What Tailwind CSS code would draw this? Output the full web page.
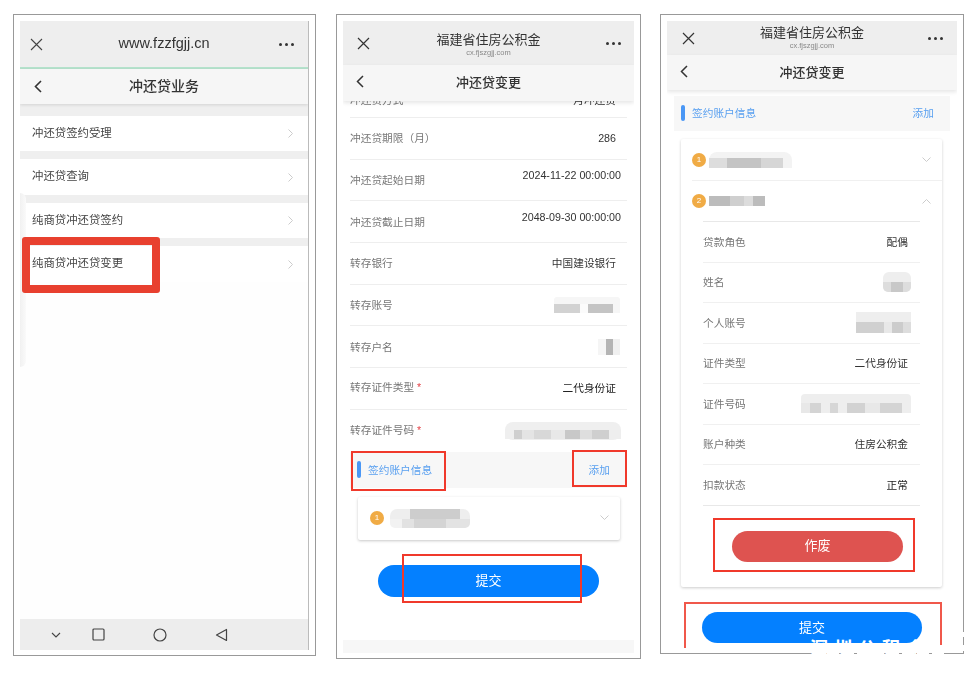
<!DOCTYPE html>
<html lang="zh-CN">
<head>
    <meta charset="UTF-8">
    <title>冲还贷变更</title>
    <script src="https://cdn.jsdelivr.net/npm/@tailwindcss/browser@4"></script>
</head>
<body class="bg-white">
<div class="relative flex h-[676px] w-[974px] items-start overflow-hidden bg-white pl-[13px] pt-[14px] font-['Liberation_Sans','Noto_Sans_CJK_SC',sans-serif]">

    <!-- 手机 1 -->
    <div class="h-[642px] w-[303px] shrink-0 border border-[#999] px-[6px] pb-[5px] pt-[6px]">
        <div class="relative flex h-full flex-col overflow-hidden border-r border-[#bbb] bg-white blur-[0.4px]">
            <div class="flex h-[46px] shrink-0 items-center justify-between bg-[#eeeeee]">
                <div class="flex w-[60px] pl-[10px]">
                    <svg width="13" height="13" viewBox="0 0 13 13" fill="none" stroke="#444" stroke-width="1.1"><path d="M1 1l11 11M12 1L1 12"/></svg>
                </div>
                <div class="text-[14.5px] font-medium text-[#333]">www.fzzfgjj.cn</div>
                <div class="flex w-[60px] justify-end gap-[3px] pr-[14px]">
                    <i class="h-[3px] w-[3px] rounded-full bg-[#333]"></i><i class="h-[3px] w-[3px] rounded-full bg-[#333]"></i><i class="h-[3px] w-[3px] rounded-full bg-[#333]"></i>
                </div>
            </div>
            <div class="h-[2px] shrink-0 bg-[#b5e2cc]"></div>
            <div class="z-10 flex h-[35px] shrink-0 items-center justify-between bg-[#f6f6f6] shadow-[0_1px_3px_rgba(0,0,0,0.12)]">
                <div class="flex w-[60px] pl-[14px]">
                    <svg width="8" height="13" viewBox="0 0 8 13" fill="none" stroke="#333" stroke-width="1.6"><path d="M7 1L1.5 6.5 7 12"/></svg>
                </div>
                <div class="text-[14px] font-medium text-[#333]">冲还贷业务</div>
                <div class="w-[60px]"></div>
            </div>
            <div class="h-[12px] shrink-0 bg-[#efefef]"></div>
            <div class="flex h-[35px] shrink-0 items-center justify-between bg-white pl-[12px] pr-[15px] text-[11.4px] text-[#444]">
                <span>冲还贷签约受理</span>
                <svg width="5" height="9" viewBox="0 0 5 9" fill="none" stroke="#ccc"><path d="M.5.5l4 4-4 4"/></svg>
            </div>
            <div class="h-[8px] shrink-0 bg-[#efefef]"></div>
            <div class="flex h-[36px] shrink-0 items-center justify-between bg-white pl-[12px] pr-[15px] text-[11.4px] text-[#444]">
                <span>冲还贷查询</span>
                <svg width="5" height="9" viewBox="0 0 5 9" fill="none" stroke="#ccc"><path d="M.5.5l4 4-4 4"/></svg>
            </div>
            <div class="h-[8px] shrink-0 bg-[#efefef]"></div>
            <div class="flex h-[35px] shrink-0 items-center justify-between bg-white pl-[12px] pr-[15px] text-[11.4px] text-[#444]">
                <span>纯商贷冲还贷签约</span>
                <svg width="5" height="9" viewBox="0 0 5 9" fill="none" stroke="#ccc"><path d="M.5.5l4 4-4 4"/></svg>
            </div>
            <div class="h-[8px] shrink-0 bg-[#efefef]"></div>
            <div class="flex h-[36px] shrink-0 items-center justify-between bg-white pl-[12px] pr-[15px] text-[11.4px] text-[#444]">
                <span>纯商贷冲还贷变更</span>
                <svg width="5" height="9" viewBox="0 0 5 9" fill="none" stroke="#ccc"><path d="M.5.5l4 4-4 4"/></svg>
            </div>
            <div class="flex-1 bg-[#fefefe]"></div>
            <div class="flex h-[31px] shrink-0 items-center bg-[#ededed] pl-[31px]">
                <svg width="10" height="6" viewBox="0 0 10 6" fill="none" stroke="#444" stroke-width="1.1"><path d="M1 1l4 4 4-4"/></svg>
                <svg class="ml-[31px]" width="13" height="13" viewBox="0 0 13 13" fill="none" stroke="#444" stroke-width="1.2"><rect x="1" y="1" width="11" height="11" rx="1"/></svg>
                <svg class="ml-[48px]" width="14" height="14" viewBox="0 0 14 14" fill="none" stroke="#444" stroke-width="1.2"><circle cx="7" cy="7" r="6"/></svg>
                <svg class="ml-[48px]" width="13" height="14" viewBox="0 0 13 14" fill="none" stroke="#444" stroke-width="1.2"><path d="M11.5 1.5v11L1.5 7z" stroke-linejoin="round"/></svg>
            </div>
            <!-- 왼쪽 희미한 플로팅 -->
            <div class="absolute left-0 top-[172px] h-[174px] w-[6px] rounded-r-[6px] bg-gradient-to-r from-[#f1f1f1] to-[#fafafa]"></div>
        </div>
    </div>

    <!-- 手机 2 -->
    <div class="ml-[20px] h-[645px] w-[305px] shrink-0 border border-[#999] px-[6px] pb-[5px] pt-[6px]">
        <div class="flex h-full flex-col overflow-hidden bg-white blur-[0.4px]">
            <div class="flex h-[44px] shrink-0 items-center justify-between bg-[#eeeeee]">
                <div class="flex w-[60px] pl-[14px]">
                    <svg width="13" height="13" viewBox="0 0 13 13" fill="none" stroke="#333" stroke-width="1.2"><path d="M1 1l11 11M12 1L1 12"/></svg>
                </div>
                <div class="mt-[3px] flex flex-col items-center">
                    <div class="text-[13px] leading-[16px] text-[#333]">福建省住房公积金</div>
                    <div class="text-[7.5px] leading-[10px] text-[#888]">cx.fjszgjj.com</div>
                </div>
                <div class="flex w-[60px] justify-end gap-[3px] pr-[13px]">
                    <i class="h-[3px] w-[3px] rounded-full bg-[#333]"></i><i class="h-[3px] w-[3px] rounded-full bg-[#333]"></i><i class="h-[3px] w-[3px] rounded-full bg-[#333]"></i>
                </div>
            </div>
            <div class="z-10 flex h-[36px] shrink-0 items-center justify-between bg-[#f6f6f6] shadow-[0_2px_4px_rgba(0,0,0,0.1)]">
                <div class="-mt-[4px] flex w-[60px] pl-[13px]">
                    <svg width="8" height="13" viewBox="0 0 8 13" fill="none" stroke="#333" stroke-width="1.5"><path d="M7 1L1.5 6.5 7 12"/></svg>
                </div>
                <div class="text-[13px] font-medium text-[#333]">冲还贷变更</div>
                <div class="w-[60px]"></div>
            </div>
            <div class="flex flex-1 flex-col px-[7px]">
                <div class="flex h-[17px] shrink-0 items-start justify-between border-b border-[#eeeeee] text-[10.7px] text-[#777]">
                    <span class="-mt-[9px]">冲还贷方式</span><span class="-mt-[9px] mr-[11px] text-[#333]">月冲还贷</span>
                </div>
                <div class="flex h-[41.7px] shrink-0 items-center justify-between border-b border-[#eeeeee] text-[10.7px] text-[#777]">
                    <span>冲还贷期限（月）</span><span class="mr-[11px] text-[#333]">286</span>
                </div>
                <div class="flex h-[41.7px] shrink-0 items-center justify-between border-b border-[#eeeeee] text-[10.7px] text-[#777]">
                    <span>冲还贷起始日期</span><span class="mb-[10px] mr-[6px] text-[#333]">2024-11-22 00:00:00</span>
                </div>
                <div class="flex h-[41.7px] shrink-0 items-center justify-between border-b border-[#eeeeee] text-[10.7px] text-[#777]">
                    <span>冲还贷截止日期</span><span class="mb-[10px] mr-[6px] text-[#333]">2048-09-30 00:00:00</span>
                </div>
                <div class="flex h-[41.7px] shrink-0 items-center justify-between border-b border-[#eeeeee] text-[10.7px] text-[#777]">
                    <span>转存银行</span><span class="mr-[11px] text-[#333]">中国建设银行</span>
                </div>
                <div class="flex h-[41.7px] shrink-0 items-center justify-between border-b border-[#eeeeee] text-[10.7px] text-[#777]">
                    <span>转存账号</span>
                    <div class="mr-[7px] h-[16px] w-[66px] rounded-[3px] bg-[#f6f6f6] pt-[7px] blur-[0.6px]">
                        <div class="h-[9px] bg-[linear-gradient(90deg,#d2d2d2_0_39%,#fbfbfb_39%_52%,#c4c4c4_52%_90%,#f6f6f6_90%)]"></div>
                    </div>
                </div>
                <div class="flex h-[41.7px] shrink-0 items-center justify-between border-b border-[#eeeeee] text-[10.7px] text-[#777]">
                    <span>转存户名</span>
                    <div class="mr-[7px] h-[16px] w-[22px] bg-[linear-gradient(90deg,#f5f5f5_0_36%,#b4b4b4_36%_68%,#f0f0f0_68%)] blur-[0.6px]"></div>
                </div>
                <div class="flex h-[41.7px] shrink-0 items-center justify-between border-b border-[#eeeeee] text-[10.7px] text-[#777]">
                    <span class="-mt-[2px]">转存证件类型 <b class="font-normal text-[#e5484d]">*</b></span><span class="mr-[11px] text-[#222]">二代身份证</span>
                </div>
                <div class="flex h-[41.7px] shrink-0 items-center justify-between text-[10.7px] text-[#777]">
                    <span class="-mt-[2px]">转存证件号码 <b class="font-normal text-[#e5484d]">*</b></span>
                    <div class="mr-[6px] h-[18px] w-[116px] rounded-[8px] bg-[#efefef] pt-[8px] blur-[0.6px]">
                        <div class="h-[9px] bg-[linear-gradient(90deg,#efefef_0_8%,#cfcfcf_8%_15%,#e4e4e4_15%_25%,#d8d8d8_25%_40%,#e8e8e8_40%_52%,#c8c8c8_52%_65%,#dedede_65%_75%,#cfcfcf_75%_90%,#eeeeee_90%)]"></div>
                    </div>
                </div>
                <div class="flex h-[36px] shrink-0 items-center justify-between bg-[#f7f7f7] pl-[7px] pr-[17px] text-[10.7px] text-[#5aa0f0]">
                    <div class="flex items-center gap-[7px]"><i class="h-[17px] w-[4px] rounded-[2px] bg-[#4a97f5]"></i><span class="mt-[1px]">签约账户信息</span></div>
                    <span class="mt-[2px]">添加</span>
                </div>
                <div class="ml-[8px] mr-[7px] mt-[9px] flex h-[43px] shrink-0 items-center rounded-[2px] bg-white pl-[12px] pr-[11px] shadow-[0_1px_3px_rgba(0,0,0,0.22)]">
                    <span class="flex h-[14px] w-[14px] items-center justify-center rounded-full bg-[#f0ab45] text-[8px] text-white">1</span>
                    <div class="ml-[6px] h-[19px] w-[80px] rounded-[7px] bg-[linear-gradient(90deg,#eeeeee_0_25%,#cdcdcd_25%_88%,#eeeeee_88%)] pt-[10px] blur-[0.7px]">
                        <div class="h-[9px] rounded-b-[5px] bg-[linear-gradient(90deg,#f2f2f2_0_15%,#e2e2e2_15%_30%,#d4d4d4_30%_70%,#e3e3e3_70%)]"></div>
                    </div>
                    <svg class="ml-auto" width="9" height="6" viewBox="0 0 9 6" fill="none" stroke="#ccc"><path d="M.5.5l4 4 4-4"/></svg>
                </div>
                <div class="ml-[28px] mt-[25px] flex h-[32px] w-[221px] shrink-0 items-center justify-center rounded-full bg-[#0480ff] text-[13px] text-white">提交</div>
            </div>
            <div class="h-[13px] shrink-0 bg-[#f7f7f7]"></div>
        </div>
    </div>

    <!-- 手机 3 -->
    <div class="ml-[19px] h-[640px] w-[304px] shrink-0 border border-[#999] px-[6px] pt-[6px]">
        <div class="flex h-[627px] flex-col overflow-hidden bg-white blur-[0.4px]">
            <div class="flex h-[34px] shrink-0 items-center justify-between bg-[#eeeeee]">
                <div class="flex w-[60px] pl-[15px]">
                    <svg width="13" height="13" viewBox="0 0 13 13" fill="none" stroke="#333" stroke-width="1.2"><path d="M1 1l11 11M12 1L1 12"/></svg>
                </div>
                <div class="flex flex-col items-center">
                    <div class="text-[13px] leading-[16px] text-[#333]">福建省住房公积金</div>
                    <div class="text-[7.5px] leading-[10px] text-[#888]">cx.fjszgjj.com</div>
                </div>
                <div class="flex w-[60px] justify-end gap-[3px] pr-[14px]">
                    <i class="h-[3px] w-[3px] rounded-full bg-[#333]"></i><i class="h-[3px] w-[3px] rounded-full bg-[#333]"></i><i class="h-[3px] w-[3px] rounded-full bg-[#333]"></i>
                </div>
            </div>
            <div class="z-10 flex h-[35px] shrink-0 items-center justify-between bg-[#f6f6f6] shadow-[0_2px_4px_rgba(0,0,0,0.1)]">
                <div class="-mt-[3px] flex w-[60px] pl-[13px]">
                    <svg width="8" height="13" viewBox="0 0 8 13" fill="none" stroke="#333" stroke-width="1.5"><path d="M7 1L1.5 6.5 7 12"/></svg>
                </div>
                <div class="text-[13px] font-medium text-[#333]">冲还贷变更</div>
                <div class="w-[60px]"></div>
            </div>
            <div class="mx-[7px] mt-[6px] flex h-[35px] shrink-0 items-center justify-between bg-[#f7f7f7] pl-[7px] pr-[16px] text-[10.7px] text-[#5aa0f0]">
                <div class="flex items-center gap-[7px]"><i class="h-[16px] w-[4px] rounded-[2px] bg-[#4a97f5]"></i><span>签约账户信息</span></div>
                <span>添加</span>
            </div>
            <div class="ml-[14px] mr-[15px] mt-[8px] flex h-[448px] shrink-0 flex-col rounded-[2px] bg-white shadow-[0_1px_3px_rgba(0,0,0,0.2)]">
                <div class="ml-[11px] flex h-[42px] shrink-0 items-center border-b border-[#f0f0f0] pr-[11px]">
                    <span class="flex h-[14px] w-[14px] items-center justify-center rounded-full bg-[#f0ab45] text-[8px] text-white">1</span>
                    <div class="ml-[3px] h-[16px] w-[83px] rounded-t-[8px] bg-[#f3f3f3] pt-[6px] blur-[0.5px]">
                        <div class="h-[10px] w-[74px] bg-[linear-gradient(90deg,#dddddd_0_24%,#c4c4c4_24%_70%,#d6d6d6_70%)]"></div>
                    </div>
                    <svg class="ml-auto" width="9" height="6" viewBox="0 0 9 6" fill="none" stroke="#ccc"><path d="M.5.5l4 4 4-4"/></svg>
                </div>
                <div class="ml-[11px] flex h-[40px] shrink-0 items-center pr-[11px]">
                    <span class="flex h-[14px] w-[14px] items-center justify-center rounded-full bg-[#f0ab45] text-[8px] text-white">2</span>
                    <div class="ml-[3px] h-[10px] w-[56px] bg-[linear-gradient(90deg,#bcbcbc_0_38%,#cfcfcf_38%_62%,#dcdcdc_62%_78%,#bcbcbc_78%)] blur-[0.5px]"></div>
                    <svg class="ml-auto" width="9" height="6" viewBox="0 0 9 6" fill="none" stroke="#ccc"><path d="M.5 5.5l4-4 4 4"/></svg>
                </div>
                <div class="mx-[22px] flex flex-col border-t border-[#e8e8e8] text-[10.7px] text-[#777]">
                    <div class="flex h-[40.5px] shrink-0 items-center justify-between border-b border-[#f0f0f0]"><span>贷款角色</span><span class="mr-[12px] text-[#333]">配偶</span></div>
                    <div class="flex h-[40.5px] shrink-0 items-center justify-between border-b border-[#f0f0f0]">
                        <span>姓名</span>
                        <div class="mr-[9px] h-[20px] w-[28px] rounded-[6px] bg-[#eeeeee] pt-[10px] blur-[0.5px]"><div class="h-[10px] rounded-b-[5px] bg-[linear-gradient(90deg,#dddddd_0_30%,#c8c8c8_30%_70%,#dddddd_70%)]"></div></div>
                    </div>
                    <div class="flex h-[40.5px] shrink-0 items-center justify-between border-b border-[#f0f0f0]">
                        <span>个人账号</span>
                        <div class="mr-[9px] h-[21px] w-[55px] bg-[#eeeeee] pt-[10px] blur-[0.5px]"><div class="h-[11px] bg-[linear-gradient(90deg,#d0d0d0_0_50%,#e8e8e8_50%_65%,#cccccc_65%_85%,#dddddd_85%)]"></div></div>
                    </div>
                    <div class="flex h-[40.5px] shrink-0 items-center justify-between border-b border-[#f0f0f0]"><span>证件类型</span><span class="mr-[12px] text-[#333]">二代身份证</span></div>
                    <div class="flex h-[40.5px] shrink-0 items-center justify-between border-b border-[#f0f0f0]">
                        <span>证件号码</span>
                        <div class="mr-[9px] h-[19px] w-[110px] rounded-[4px] bg-[#eeeeee] pt-[9px] blur-[0.5px]"><div class="h-[10px] bg-[linear-gradient(90deg,#e8e8e8_0_8%,#d4d4d4_8%_18%,#eeeeee_18%_26%,#d6d6d6_26%_34%,#eeeeee_34%_42%,#d2d2d2_42%_58%,#e8e8e8_58%_72%,#d4d4d4_72%_92%,#eeeeee_92%)]"></div></div>
                    </div>
                    <div class="flex h-[40.5px] shrink-0 items-center justify-between border-b border-[#f0f0f0]"><span>账户种类</span><span class="mr-[12px] text-[#333]">住房公积金</span></div>
                    <div class="flex h-[40.5px] shrink-0 items-center justify-between border-b border-[#e8e8e8]"><span>扣款状态</span><span class="mr-[12px] text-[#222]">正常</span></div>
                </div>
                <div class="ml-[51px] mt-[25px] flex h-[31px] w-[171px] shrink-0 items-center justify-center rounded-full bg-[#de5350] text-[13px] text-white">作废</div>
            </div>
            <div class="ml-[35px] mt-[25px] flex h-[31px] w-[220px] shrink-0 items-center justify-center rounded-full bg-[#0480ff] text-[13px] text-white">提交</div>
        </div>
    </div>

    <!-- 빨간 표시 -->
    <div class="absolute left-[22px] top-[237px] h-[56px] w-[138px] rounded-[3px] border-[8px] border-[#e8402f]"></div>
    <div class="absolute left-[351px] top-[451px] h-[40px] w-[95px] border-2 border-[#f0392b]"></div>
    <div class="absolute left-[572px] top-[450px] h-[37px] w-[55px] border-2 border-[#f0392b]"></div>
    <div class="absolute left-[402px] top-[554px] h-[49px] w-[180px] border-2 border-[#f0392b]"></div>
    <div class="absolute left-[713px] top-[518px] h-[54px] w-[202px] border-2 border-[#f0392b]"></div>
    <div class="absolute left-[684px] top-[602px] h-[46px] w-[258px] border-2 border-b-0 border-[#f0584b]"></div>

    <!-- 하단 워터마크 -->
    <div class="absolute left-[810px] top-[638px] h-[18px] w-[154px] overflow-hidden text-[18px] font-bold leading-[22px] tracking-[6px] text-white">深圳公积金</div>
    <div class="absolute left-[810px] top-[645px] h-[6px] w-[154px] bg-white"></div>
    <div class="absolute left-[812px] top-[653px] h-[3px] w-[132px] bg-[repeating-linear-gradient(90deg,#fff_0_12px,transparent_12px_15px)]"></div>
    <div class="absolute left-[962px] top-[632px] h-[5px] w-[3px] bg-white"></div>
</div>
</body>
</html>
